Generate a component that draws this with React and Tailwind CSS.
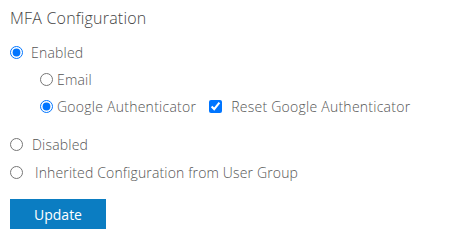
import { useState } from 'react'

const font = { fontFamily: '"Open Sans", Lato, sans-serif' }

const App = () => {
  const [mode, setMode] = useState('enabled')
  const [method, setMethod] = useState('google')
  const [reset, setReset] = useState(true)

  return (
    <div className="min-h-[239px] w-[451px] bg-white pt-[6px] pl-[10px] text-[#555]" style={font}>
      <h2 className="h-6 text-[16px] leading-6 font-light tracking-[0.2px] text-[#444]">MFA Configuration</h2>

      <label className="mt-[9px] flex h-[27px] items-center">
        <input
          type="radio"
          name="mfa"
          checked={mode === 'enabled'}
          onChange={() => setMode('enabled')}
          className="h-[13px] w-[13px]"
        />
        <span className="ml-[8px] text-[14px] font-light tracking-[0.2px]">Enabled</span>
      </label>

      <div className="pl-[30px]">
        <label className="flex h-[27px] items-center">
          <input
            type="radio"
            name="method"
            checked={method === 'email'}
            onChange={() => setMethod('email')}
            className="h-[13px] w-[13px]"
          />
          <span className="ml-[4px] text-[14px] font-light tracking-[0.2px]">Email</span>
        </label>
        <div className="flex h-[27px] items-center">
          <label className="flex items-center">
            <input
              type="radio"
              name="method"
              checked={method === 'google'}
              onChange={() => setMethod('google')}
              className="h-[13px] w-[13px]"
            />
            <span className="ml-[4px] text-[14px] font-light tracking-[0.25px]">Google Authenticator</span>
          </label>
          <label className="ml-[13px] flex items-center">
            <input
              type="checkbox"
              checked={reset}
              onChange={(e) => setReset(e.target.checked)}
              className="h-[13px] w-[13px]"
            />
            <span className="ml-[9px] text-[14px] font-light tracking-[0.25px]">Reset Google Authenticator</span>
          </label>
        </div>
      </div>

      <label className="mt-[11px] flex h-[27px] items-center">
        <input
          type="radio"
          name="mfa"
          checked={mode === 'disabled'}
          onChange={() => setMode('disabled')}
          className="h-[13px] w-[13px]"
        />
        <span className="ml-[9px] text-[14px] font-light tracking-[0.2px]">Disabled</span>
      </label>

      <label className="mt-[1px] flex h-[27px] items-center">
        <input
          type="radio"
          name="mfa"
          checked={mode === 'inherited'}
          onChange={() => setMode('inherited')}
          className="h-[13px] w-[13px]"
        />
        <span className="ml-[12px] text-[14px] font-light tracking-[0.15px]">Inherited Configuration from User Group</span>
      </label>

      <button className="mt-[13px] h-[30px] w-[96px] bg-[#0b7dc2] text-[14px] text-white">
        Update
      </button>
    </div>
  )
}

export default App
